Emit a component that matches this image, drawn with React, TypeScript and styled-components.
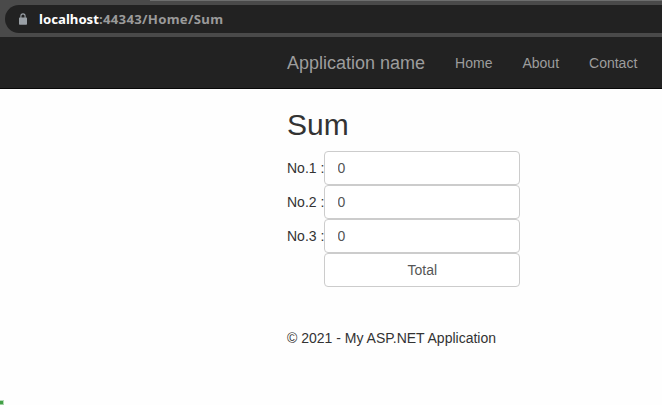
import React from 'react';
import styled, { createGlobalStyle } from 'styled-components';

const GlobalStyle = createGlobalStyle`
  *, *::before, *::after { box-sizing: border-box; }
  html, body { margin: 0; height: 100%; overflow: hidden; background: #fefefe; }
  body {
    font: 14px/20px "Liberation Sans", Arial, sans-serif;
    color: #333;
  }
`;

const Page = styled.div`
  display: flex;
  flex-direction: column;
  height: 100vh;
`;

const BrowserBar = styled.div`
  height: 37px;
  flex: none;
  padding: 4px 0 0 5px;
  background: #4a4a4a;
  border-top: 1px solid transparent;
  border-image: linear-gradient(90deg, #4a4a4a 151px, #6d6e6e 151px) 1;
`;

const AddressField = styled.div`
  display: flex;
  align-items: center;
  height: 28px;
  padding-left: 14px;
  border-radius: 14px 0 0 14px;
  background: #222;
`;

const LockIcon = styled.svg`
  display: block;
  flex: none;
  width: 8px;
  height: 12px;
  margin-bottom: 1px;
`;

const Url = styled.div`
  width: 186px;
  margin-left: 12px;
  font: 700 13.2px/28px "Noto Sans", "Open Sans", sans-serif;
  letter-spacing: 0.28px;
  color: #9a9a9a;
  white-space: nowrap;
`;

const Host = styled.span`
  letter-spacing: 0;
  color: #fff;
`;

const Navbar = styled.nav`
  display: flex;
  flex: none;
  height: 52px;
  padding-left: 287px;
  background: #222;
  border-bottom: 1px solid #080808;
  color: #9d9d9d;
  line-height: 52px;
`;

const Brand = styled.a`
  font-size: 18px;
  margin-right: 15px;
  white-space: nowrap;
`;

const NavLink = styled.a`
  padding: 0 15px;
`;

const Content = styled.main`
  padding-left: 287px;
`;

const Title = styled.h2`
  margin: 19px 0 10px;
  font-size: 30px;
  font-weight: 400;
  line-height: 33px;
`;

const SumForm = styled.form`
  display: grid;
  grid-template-columns: 37px 196px;
  grid-auto-rows: 34px;
  align-items: center;
`;

const Label = styled.label`
  white-space: nowrap;
`;

const Input = styled.input`
  width: 196px;
  height: 34px;
  padding: 6px 12px 6px 12.5px;
  border: 1px solid #ccc;
  border-radius: 4px;
  outline: none;
  background: #fff;
  color: #555;
  font: inherit;
`;

const TotalButton = styled.button`
  grid-column: 2;
  width: 196px;
  height: 34px;
  padding: 6px 12px 6px 12.5px;
  border: 1px solid #ccc;
  border-radius: 4px;
  background: #fff;
  color: #555;
  font: inherit;
`;

const Footer = styled.footer`
  margin-top: 41px;
`;

const ProgressMark = styled.div`
  width: 4px;
  height: 5px;
  margin-top: auto;
  border: 1px solid #b5dcb8;
  border-left: 0;
  border-bottom-color: #9ccf9f;
  background: #43a047;
`;

const fields = ['No.1 :', 'No.2 :', 'No.3 :'];
const links = ['Home', 'About', 'Contact'];

export default function App() {
  return (
    <Page>
      <GlobalStyle />
      <BrowserBar>
        <AddressField>
          <LockIcon viewBox="0 0 8 12">
            <path d="M1.9 5V3a2.1 2.1 0 0 1 4.2 0v2" fill="none" stroke="#9aa0a6" strokeWidth="1.1" />
            <rect y="4.5" width="8" height="7.2" rx="0.7" fill="#9aa0a6" />
          </LockIcon>
          <Url><Host>localhost</Host>:44343/Home/Sum</Url>
        </AddressField>
      </BrowserBar>
      <Navbar>
        <Brand>Application name</Brand>
        {links.map((link) => <NavLink key={link}>{link}</NavLink>)}
      </Navbar>
      <Content>
        <Title>Sum</Title>
        <SumForm>
          {fields.map((field, i) => (
            <React.Fragment key={field}>
              <Label htmlFor={`no${i + 1}`}>{field}</Label>
              <Input id={`no${i + 1}`} defaultValue="0" />
            </React.Fragment>
          ))}
          <TotalButton type="button">Total</TotalButton>
        </SumForm>
        <Footer>© 2021 - My ASP.NET Application</Footer>
      </Content>
      <ProgressMark />
    </Page>
  );
}
